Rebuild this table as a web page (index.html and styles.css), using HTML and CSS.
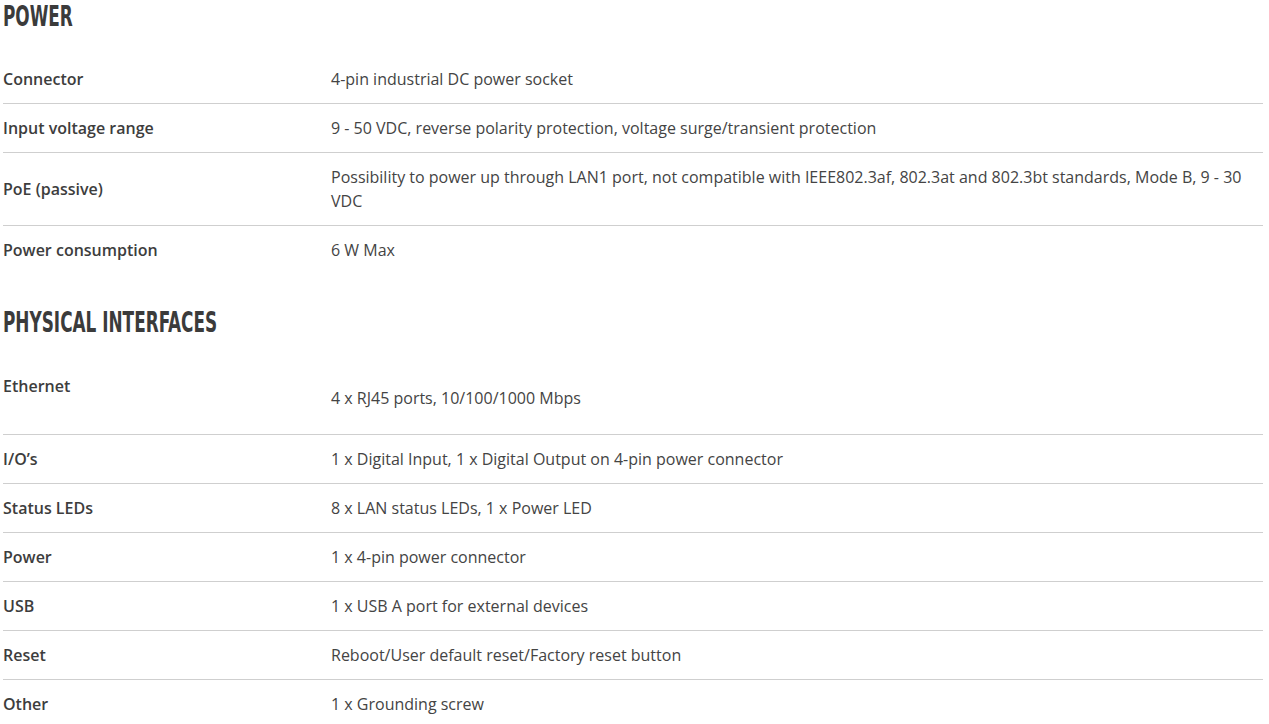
FILE: index.html
```html
<!DOCTYPE html>
<html lang="en">
<head>
<meta charset="utf-8">
<title>Specifications</title>
<link rel="stylesheet" href="styles.css">
</head>
<body>
<div class="specs">
  <section class="section">
    <h2 class="section-title"><span>POWER</span></h2>
    <div class="table">
      <div class="row"><div class="label">Connector</div><div class="value">4-pin industrial DC power socket</div></div>
      <div class="row"><div class="label">Input voltage range</div><div class="value">9 - 50 VDC, reverse polarity protection, voltage surge/transient protection</div></div>
      <div class="row"><div class="label">PoE (passive)</div><div class="value">Possibility to power up through LAN1 port, not compatible with IEEE802.3af, 802.3at and 802.3bt standards, Mode B, 9 - 30 VDC</div></div>
      <div class="row"><div class="label">Power consumption</div><div class="value">6 W Max</div></div>
    </div>
  </section>
  <section class="section section-next">
    <h2 class="section-title"><span>PHYSICAL INTERFACES</span></h2>
    <div class="table">
      <div class="row row-top"><div class="label">Ethernet</div><div class="value value-spaced">4 x RJ45 ports, 10/100/1000 Mbps</div></div>
      <div class="row"><div class="label">I/O’s</div><div class="value">1 x Digital Input, 1 x Digital Output on 4-pin power connector</div></div>
      <div class="row"><div class="label">Status LEDs</div><div class="value">8 x LAN status LEDs, 1 x Power LED</div></div>
      <div class="row"><div class="label">Power</div><div class="value">1 x 4-pin power connector</div></div>
      <div class="row"><div class="label">USB</div><div class="value">1 x USB A port for external devices</div></div>
      <div class="row"><div class="label">Reset</div><div class="value">Reboot/User default reset/Factory reset button</div></div>
      <div class="row"><div class="label">Other</div><div class="value">1 x Grounding screw</div></div>
    </div>
  </section>
</div>
</body>
</html>
```

FILE: styles.css
```css
html, body {
  margin: 0;
  padding: 0;
  background: #ffffff;
}

body {
  font-family: "Open Sans", "Noto Sans", sans-serif;
  font-size: 16px;
  line-height: 24px;
  color: #404040;
}

.specs {
  padding: 0 6px 0 3px;
}

.section-title {
  margin: 0 0 21px 0;
  height: 34px;
  font-family: "Liberation Sans Narrow", "DejaVu Sans Condensed", "Liberation Sans", sans-serif;
  font-weight: 700;
  font-size: 28px;
  line-height: 34px;
  color: #3b3b3b;
  white-space: nowrap;
}

.section-title span {
  display: inline-block;
  transform: scaleX(0.67);
  transform-origin: left center;
}

.section-next {
  margin-top: 32px;
}

.section-next .section-title {
  margin-bottom: 22px;
}

.table {
  display: flex;
  flex-direction: column;
}

.row {
  display: grid;
  grid-template-columns: 328px 1fr;
  align-items: center;
  padding: 12px 0;
  border-bottom: 1px solid #cfcfcf;
}

.row:last-child {
  border-bottom: none;
}

.row-top {
  align-items: start;
  padding: 0;
}

.row-top .label {
  padding-top: 12px;
}

.value-spaced {
  padding: 24px 0;
}

.label {
  font-weight: 600;
  color: #3d3d3d;
}

.value {
  font-weight: 400;
  color: #444444;
}
```
